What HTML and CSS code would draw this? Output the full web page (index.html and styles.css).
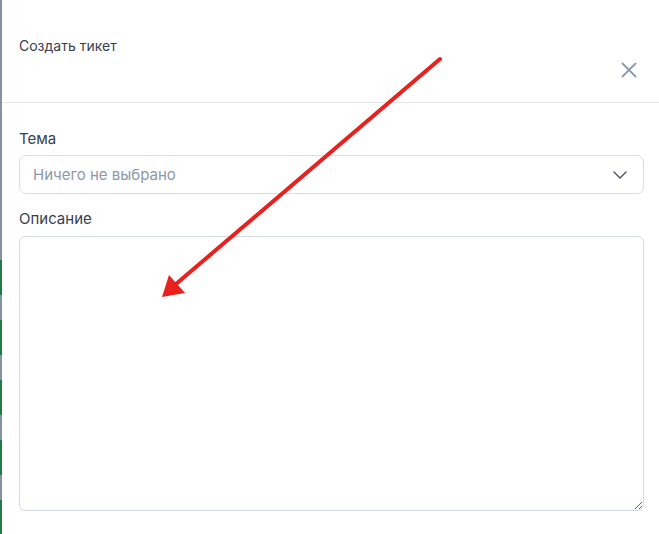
FILE: index.html
```html
<!DOCTYPE html>
<html lang="ru">
<head>
    <meta charset="UTF-8">
    <meta name="viewport" content="width=device-width, initial-scale=1.0">
    <title>Создать тикет</title>
    <link rel="stylesheet" href="styles.css">
</head>
<body>
    <div class="page">
        <div class="side-strip"></div>

        <div class="modal">
            <div class="modal-header">
                <h2 class="modal-title">Создать тикет</h2>
                <button class="close-btn" type="button" aria-label="Закрыть">
                    <svg width="16" height="16" viewBox="0 0 16 16">
                        <path d="M1.5 1.5 L14.5 14.5 M14.5 1.5 L1.5 14.5" stroke="#8d99ab" stroke-width="1.8" stroke-linecap="round" fill="none"/>
                    </svg>
                </button>
            </div>

            <div class="modal-body">
                <label class="field-label label-topic">Тема</label>
                <div class="select-box">
                    <span class="placeholder">Ничего не выбрано</span>
                    <svg class="chevron" width="14" height="8" viewBox="0 0 14 8">
                        <path d="M1 1 L7 7 L13 1" stroke="#4a5261" stroke-width="1.4" fill="none" stroke-linecap="round" stroke-linejoin="round"/>
                    </svg>
                </div>

                <label class="field-label label-desc">Описание</label>
                <textarea class="description"></textarea>
            </div>
        </div>

        <!-- annotation arrow drawn over the form -->
        <svg class="annotation" width="659" height="534" viewBox="0 0 659 534">
            <line x1="440" y1="59" x2="176" y2="284" stroke="#e8211e" stroke-width="4" stroke-linecap="round"/>
            <polygon points="162,297 169,275 185,293" fill="#e8211e"/>
        </svg>
    </div>
</body>
</html>
```

FILE: styles.css
```css
body {
    margin: 0;
    font-family: 'Inter', 'Noto Sans', sans-serif;
    background: #ffffff;
    color: #3b4456;
}

.page {
    position: relative;
    display: flex;
    width: 659px;
    height: 534px;
    overflow: hidden;
}

.side-strip {
    width: 2px;
    flex-shrink: 0;
    background:
        linear-gradient(#8592a4, #8592a4) top / 2px 260px no-repeat,
        repeating-linear-gradient(to bottom, #1f7a45 0px, #1f7a45 35px, #8592a4 35px, #8592a4 60px) 0 260px / 2px 274px no-repeat;
}

.modal {
    flex: 1;
    display: flex;
    flex-direction: column;
}

.modal-header {
    display: flex;
    justify-content: space-between;
    align-items: flex-start;
    height: 103px;
    box-sizing: border-box;
    padding: 36px 22px 0 17px;
    border-bottom: 1px solid #e4e6ea;
}

.modal-title {
    margin: 0;
    font-size: 14px;
    line-height: 20px;
    font-weight: 400;
    color: #354052;
}

.close-btn {
    margin-top: 26px;
    padding: 0;
    border: none;
    background: none;
    width: 16px;
    height: 16px;
    cursor: pointer;
}

.close-btn svg {
    display: block;
}

.modal-body {
    padding: 0 15px 0 17px;
}

.field-label {
    display: block;
    font-size: 15px;
    line-height: 20px;
    font-weight: 400;
    color: #354052;
}

.label-topic {
    margin-top: 26px;
}

.select-box {
    display: flex;
    align-items: center;
    justify-content: space-between;
    margin-top: 6px;
    height: 39px;
    box-sizing: border-box;
    padding: 0 16px 0 13px;
    border: 1px solid #d8dde8;
    border-radius: 7px;
}

.placeholder {
    font-size: 15px;
    color: #8d97a8;
}

.chevron {
    display: block;
}

.label-desc {
    margin-top: 15px;
}

.description {
    display: block;
    margin-top: 7px;
    width: 100%;
    height: 275px;
    box-sizing: border-box;
    border: 1px solid #d4d9e6;
    border-radius: 6px;
    font-family: inherit;
    resize: vertical;
}

.annotation {
    position: absolute;
    left: 0;
    top: 0;
    pointer-events: none;
}
```
